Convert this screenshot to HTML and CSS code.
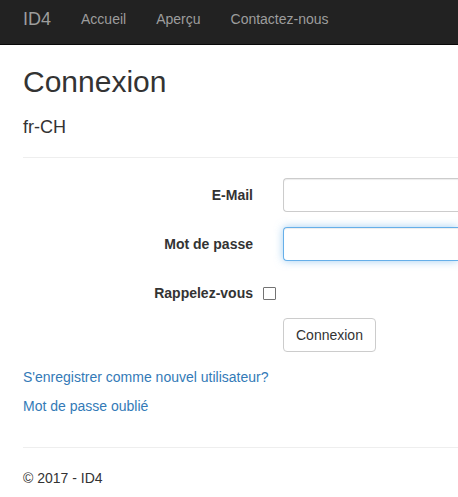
FILE: index.html
```html
<!DOCTYPE html>
<html lang="fr">
<head>
<meta charset="utf-8">
<title>Connexion - ID4</title>
<link rel="stylesheet" href="styles.css">
</head>
<body>
<nav class="navbar">
  <a class="brand" href="#">ID4</a>
  <a class="nav-link" href="#">Accueil</a>
  <a class="nav-link" href="#">Aperçu</a>
  <a class="nav-link" href="#">Contactez-nous</a>
</nav>
<main class="container">
  <h2 class="title">Connexion</h2>
  <h4 class="culture">fr-CH</h4>
  <hr class="rule">
  <form class="form">
    <div class="form-group">
      <label class="control-label" for="email">E-Mail</label>
      <input class="form-control" id="email" type="email">
    </div>
    <div class="form-group">
      <label class="control-label" for="password">Mot de passe</label>
      <input class="form-control is-focused" id="password" type="password">
    </div>
    <div class="form-group check-group">
      <label class="control-label" for="remember">Rappelez-vous</label>
      <input class="check" id="remember" type="checkbox">
    </div>
    <div class="form-group">
      <button class="btn" type="button">Connexion</button>
    </div>
  </form>
  <div class="links">
    <p><a href="#">S'enregistrer comme nouvel utilisateur?</a></p>
    <p><a href="#">Mot de passe oublié</a></p>
  </div>
  <hr class="rule footer-rule">
  <footer class="footer">
    <p>© 2017 - ID4</p>
  </footer>
</main>
</body>
</html>
```
FILE: styles.css
```css
html, body {
  margin: 0;
  padding: 0;
}
body {
  font-family: "Liberation Sans", Arial, sans-serif;
  font-size: 14px;
  line-height: 20px;
  color: #333;
  background: #fff;
  overflow: hidden;
}
a {
  color: #337ab7;
  text-decoration: none;
}
.navbar {
  display: flex;
  align-items: flex-start;
  height: 44px;
  background: #222;
  border-bottom: 1px solid #080808;
  padding-left: 8px;
}
.brand {
  font-size: 18px;
  line-height: 20px;
  padding: 9px 15px 0;
  color: #9d9d9d;
}
.nav-link {
  font-size: 14px;
  line-height: 20px;
  padding: 9px 15px 0;
  color: #9d9d9d;
}
.container {
  padding-left: 23px;
}
.title {
  font-size: 30px;
  font-weight: 500;
  line-height: 33px;
  margin: 20px 0 0;
}
.culture {
  font-size: 18px;
  font-weight: 500;
  line-height: 20px;
  margin: 19px 0 0;
}
.rule {
  border: 0;
  border-top: 1px solid #eee;
  height: 0;
  margin: 20px 0 20px;
}
.form-group {
  display: flex;
  align-items: flex-start;
  margin-bottom: 15px;
}
.control-label {
  width: 230px;
  flex: none;
  text-align: right;
  font-weight: bold;
  padding-top: 7px;
  line-height: 20px;
}
.form-control {
  margin: 0 0 0 30px;
  flex: 1 1 auto;
  min-width: 0;
  height: 34px;
  box-sizing: border-box;
  padding: 6px 12px;
  font: inherit;
  color: #555;
  background: #fff;
  border: 1px solid #ccc;
  border-right-width: 0;
  border-radius: 4px 0 0 4px;
  box-shadow: inset 0 1px 1px rgba(0, 0, 0, .075);
  outline: none;
}
.form-control.is-focused {
  border-color: #66afe9;
  box-shadow: inset 0 1px 1px rgba(0, 0, 0, .075), 0 0 8px rgba(102, 175, 233, .6);
}
.check {
  appearance: none;
  -webkit-appearance: none;
  flex: none;
  width: 13px;
  height: 13px;
  margin: 11px 0 0 10px;
  box-sizing: border-box;
  border: 1px solid #737373;
  border-radius: 1px;
  background: #fff;
}
.check-group {
  height: 27px;
}
.btn {
  margin-left: 260px;
  height: 34px;
  box-sizing: border-box;
  padding: 6px 12px;
  font: inherit;
  line-height: 20px;
  color: #333;
  background: #fff;
  border: 1px solid #ccc;
  border-radius: 4px;
}
.links p {
  margin: 0 0 9px;
}
.links p:last-child {
  margin-bottom: 0;
}
.footer-rule {
  margin-top: 31px;
}
.footer p {
  margin: 0;
}
```
